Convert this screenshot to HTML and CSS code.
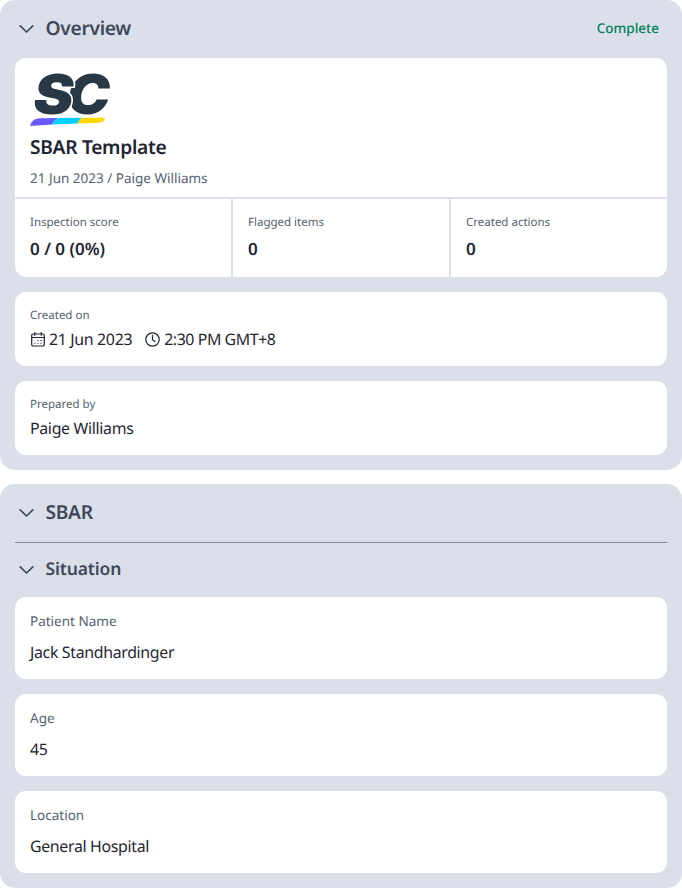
FILE: index.html
```html
<!DOCTYPE html>
<html lang="en">
<head>
  <meta charset="UTF-8">
  <meta name="viewport" content="width=device-width, initial-scale=1.0">
  <title>SBAR Template</title>
  <link rel="stylesheet" href="styles.css">
</head>
<body>
  <section class="panel">
    <header class="panel-header">
      <svg class="chevron" viewBox="0 0 15 9"><path d="M1.2 1.9 7.5 8 13.8 1.9"/></svg>
      <h1>Overview</h1>
      <span class="status">Complete</span>
    </header>

    <div class="card summary">
      <div class="summary-top">
        <svg class="logo" viewBox="0 0 82 56" role="img" aria-label="SC">
          <text class="logo-letter" x="37" y="42" textLength="43" lengthAdjust="spacingAndGlyphs">C</text>
          <text class="logo-letter logo-front" x="3.500" y="42" textLength="40" lengthAdjust="spacingAndGlyphs">S</text>
          <path fill="#6559ff" d="M0 54Q2 46.500 10 46.300L28 46Q24 48 22 52.600Z"/>
          <path fill="#00d1ff" d="M28 46 52 45.700Q49 47.500 47.500 51.600L22 52.600Q24 48 28 46Z"/>
          <path fill="#ffd500" d="M52 45.700H75Q74 50.500 69 50.700L47.500 51.600Q49 47.500 52 45.700Z"/>
        </svg>
        <h2>SBAR Template</h2>
        <p class="byline">21 Jun 2023 / Paige Williams</p>
      </div>
      <div class="stats">
        <div class="stat">
          <div class="label">Inspection score</div>
          <div class="score">0 / 0 (0%)</div>
        </div>
        <div class="stat">
          <div class="label">Flagged items</div>
          <div class="score">0</div>
        </div>
        <div class="stat">
          <div class="label">Created actions</div>
          <div class="score">0</div>
        </div>
      </div>
    </div>

    <div class="card field">
      <div class="label">Created on</div>
      <div class="value date-row">
        <svg class="icon calendar" viewBox="0 0 14 15">
          <rect x=".7" y="2" width="12.600" height="12" rx="1.600"/>
          <path d="M.7 5.500H13.300M3.800.5V3.300M10.200.5V3.300"/>
          <path class="dots" d="M6.400 8.500h1.200M9.400 8.500h1.200M3.400 11.200h1.200M6.400 11.200h1.200M9.400 11.200h1.200"/>
        </svg>
        <span>21 Jun 2023</span>
        <svg class="icon clock" viewBox="0 0 15 15">
          <circle cx="7.500" cy="7.500" r="6.700"/>
          <path d="M7.500 3.300V7.700L10 9.600"/>
        </svg>
        <span class="time">2:30 PM GMT+8</span>
      </div>
    </div>

    <div class="card field">
      <div class="label">Prepared by</div>
      <div class="value">Paige Williams</div>
    </div>
  </section>

  <section class="panel">
    <header class="panel-header">
      <svg class="chevron" viewBox="0 0 15 9"><path d="M1.2 1.9 7.500 8 13.800 1.9"/></svg>
      <h1>SBAR</h1>
    </header>
    <header class="panel-header sub-header">
      <svg class="chevron" viewBox="0 0 15 9"><path d="M1.2 1.9 7.500 8 13.800 1.9"/></svg>
      <h2>Situation</h2>
    </header>

    <div class="card answer">
      <div class="label">Patient Name</div>
      <div class="value">Jack Standhardinger</div>
    </div>
    <div class="card answer">
      <div class="label">Age</div>
      <div class="value">45</div>
    </div>
    <div class="card answer">
      <div class="label">Location</div>
      <div class="value">General Hospital</div>
    </div>
  </section>
</body>
</html>
```
FILE: styles.css
```css
* {
  box-sizing: border-box;
}
body {
  margin: 0;
  background: #fff;
  color: #1f2533;
  font-family: "Noto Sans", sans-serif;
  text-rendering: geometricPrecision;
}
h1, h2, p {
  margin: 0;
}
.panel {
  padding: 0 15px 15px;
  background: #dbdfea;
  border-radius: 15px;
  margin-bottom: 14px;
}
.panel:last-child {
  margin-bottom: 0;
}
.panel-header {
  display: flex;
  align-items: center;
  height: 58px;
  padding: 0 8px 2px 4px;
  color: #3f495a;
}
.panel-header h1 {
  font-size: 19.2px;
  line-height: 26px;
  font-weight: 600;
  letter-spacing: -0.3px;
}
.panel-header h2 {
  font-size: 17.5px;
  line-height: 24px;
  font-weight: 600;
  letter-spacing: -0.15px;
}
.sub-header {
  height: 55px;
  border-top: 1px solid #828896;
}
.chevron {
  width: 15px;
  height: 9px;
  margin-right: 11.5px;
  fill: none;
  stroke: #3f495a;
  stroke-width: 1.7;
  stroke-linecap: round;
  stroke-linejoin: round;
}
.status {
  margin-left: auto;
  color: #00815b;
  font-size: 13.5px;
  font-weight: 500;
}
.card {
  background: #fff;
  border-radius: 11px;
}
.card + .card {
  margin-top: 15px;
}
.summary-top {
  height: 141px;
  padding: 14px 15px 0;
  border-bottom: 2px solid #dbdfea;
}
.logo {
  display: block;
  width: 82px;
  height: 56px;
  overflow: visible;
}
.logo-letter {
  fill: #293845;
  font-family: Inter, sans-serif;
  font-size: 55px;
  font-style: italic;
  font-weight: 900;
}
.logo-front {
  stroke: #fff;
  stroke-width: 3;
  paint-order: stroke;
}
.summary h2 {
  padding-top: 6px;
  font-size: 19.2px;
  line-height: 26px;
  font-weight: 600;
  letter-spacing: -0.3px;
}
.byline {
  padding-top: 8px;
  color: #545f70;
  font-size: 13.5px;
  line-height: 20px;
}
.stats {
  display: grid;
  grid-template-columns: 218px 218px 1fr;
}
.stat {
  height: 78px;
  padding: 16px 15px 0;
}
.stat:not(:last-child) {
  border-right: 2px solid #dbdfea;
}
.label {
  color: #545f70;
  font-size: 11.5px;
  line-height: 16px;
}
.score {
  padding-top: 6px;
  font-size: 17px;
  line-height: 24px;
  font-weight: 600;
}
.value {
  font-size: 15.9px;
  line-height: 22px;
  letter-spacing: -0.33px;
}
.field {
  height: 74px;
  padding: 16px 15px 0;
}
.field .value {
  padding-top: 4px;
}
.date-row {
  display: flex;
  align-items: center;
}
.time {
  letter-spacing: -0.42px;
}
.icon {
  flex: none;
  fill: none;
  stroke: #1f2533;
  stroke-width: 1.2;
  stroke-linecap: round;
}
.calendar {
  width: 14px;
  height: 15px;
  margin: 0 4px 0 1px;
}
.calendar .dots {
  stroke-width: 1.1;
  stroke-linecap: butt;
}
.clock {
  width: 15px;
  height: 15px;
  margin: 0 4px 0 13px;
}
.answer {
  height: 82px;
  padding: 15px 15px 0;
}
.answer .label {
  font-size: 13.5px;
  line-height: 18px;
}
.answer .value {
  padding-top: 11px;
}
```
